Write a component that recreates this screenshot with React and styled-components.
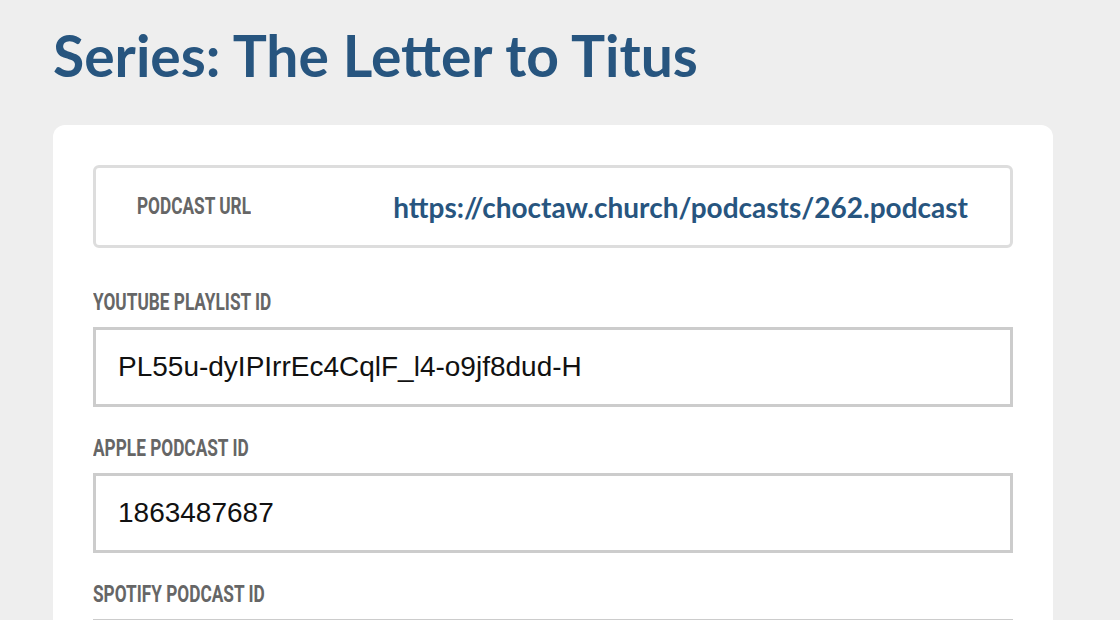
import React from 'react';
import styled, { createGlobalStyle } from 'styled-components';

const GlobalStyle = createGlobalStyle`
    body {
        margin: 0;
        background: #eeeeee;
        font-family: Lato, "Liberation Sans", sans-serif;
    }
`;

const Page = styled.div`
    padding: 20px 53px 0;
`;

const Title = styled.h1`
    margin: 0 0 35px;
    font-family: Lato, sans-serif;
    font-weight: 700;
    font-size: 57px;
    line-height: 70px;
    color: #27557f;
`;

const Card = styled.div`
    width: 1000px;
    box-sizing: border-box;
    padding: 40px;
    background: #ffffff;
    border-radius: 12px;
`;

const UrlBox = styled.div`
    display: flex;
    align-items: center;
    justify-content: space-between;
    height: 83px;
    box-sizing: border-box;
    padding: 0 42px 0 41px;
    margin-bottom: 42px;
    border: 3px solid #dddddd;
    border-radius: 6px;
`;

// condensed caps, squeezed from Roboto Bold
const Label = styled.label`
    display: block;
    margin-bottom: ${p => (p.$inline ? 0 : 12)}px;
    font-family: Roboto, "Liberation Sans", sans-serif;
    font-weight: 700;
    font-size: 23px;
    line-height: 25px;
    color: #666666;
    text-transform: uppercase;
    white-space: nowrap;
    transform: scaleX(0.75);
    transform-origin: left center;
`;

const UrlLink = styled.a`
    font-family: Lato, sans-serif;
    font-weight: 700;
    font-size: 28px;
    color: #27557f;
    text-decoration: none;
`;

const Field = styled.div`
    margin-bottom: 29px;
`;

const Input = styled.input`
    display: block;
    width: 100%;
    height: 80px;
    box-sizing: border-box;
    margin: 0;
    padding: 0 22px;
    border: 3px solid #cccccc;
    border-radius: 0;
    outline: none;
    background: #ffffff;
    font-family: "Liberation Sans", Arial, sans-serif;
    font-size: 28px;
    color: #111111;
`;

const fields = [
    { id: 'youtube', label: 'YouTube Playlist ID', value: 'PL55u-dyIPIrrEc4CqlF_l4-o9jf8dud-H' },
    { id: 'apple', label: 'Apple Podcast ID', value: '1863487687' },
    { id: 'spotify', label: 'Spotify Podcast ID', value: '' },
];

export default function App() {
    return (
        <Page>
            <GlobalStyle />
            <Title>Series: The Letter to Titus</Title>
            <Card>
                <UrlBox>
                    <Label as="span" $inline>Podcast URL</Label>
                    <UrlLink href="#">https://choctaw.church/podcasts/262.podcast</UrlLink>
                </UrlBox>
                {fields.map(f => (
                    <Field key={f.id}>
                        <Label htmlFor={f.id}>{f.label}</Label>
                        <Input id={f.id} defaultValue={f.value} readOnly />
                    </Field>
                ))}
            </Card>
        </Page>
    );
}
